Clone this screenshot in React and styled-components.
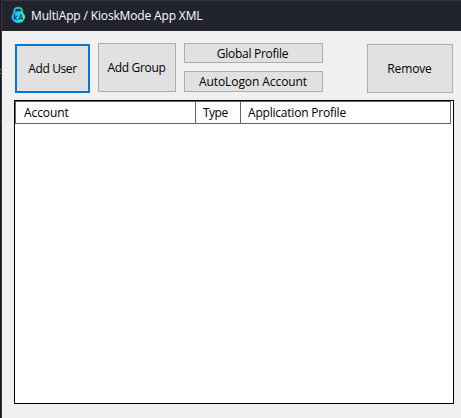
import React from "react";
import styled, { createGlobalStyle } from "styled-components";

const GlobalStyle = createGlobalStyle`
  * { box-sizing: border-box; }
  body { margin: 0; overflow: hidden; }
`;

const Desktop = styled.div`
  width: 461px;
  height: 418px;
  padding-left: 1px;
  background: linear-gradient(
    #15161b 69px, #8a7850 69px, #8a7850 70px, #15161b 70px,
    #15161b 73px, #8a7850 73px, #8a7850 74px, #15161b 74px,
    #15161b 121px, #33353b 121px, #33353b 122px, #15161b 122px
  );
  font-family: "Open Sans", "Noto Sans", sans-serif;
  font-size: 12px;
  color: #000;
`;

const Window = styled.div`
  height: 100%;
  display: flex;
  flex-direction: column;
  border-left: 1px solid #3a3c41;
  background: #f0f0f0;
`;

const TitleBar = styled.header`
  height: 31px;
  display: flex;
  align-items: center;
  padding-left: 9px;
  border-top: 1px solid #363942;
  background: #21242d;
  color: #fff;
`;

const AppIcon = styled.svg`
  flex: none;
  width: 16px;
  height: 18px;
  margin: 0 4px 2px 0;
`;

const Label = styled.span`
  line-height: 16px;
  white-space: nowrap;
  letter-spacing: ${(p) => p.$spacing || 0}px;
`;

const Content = styled.main`
  padding: 12px 7px 0 12px;
`;

const Toolbar = styled.div`
  display: flex;
  align-items: flex-start;
  height: 57px;
  padding-left: 1px;
`;

const ProfileButtons = styled.div`
  display: flex;
  flex-direction: column;
  gap: 8px;
  margin-left: 8px;
`;

const Button = styled.button`
  display: flex;
  align-items: center;
  justify-content: center;
  width: ${(p) => p.$width}px;
  height: ${(p) => p.$height}px;
  margin: ${(p) => p.$margin || 0};
  padding: ${(p) => p.$padding || 0};
  border: ${(p) => (p.$focused ? "2px solid #0078d7" : "1px solid #adadad")};
  border-radius: 0;
  background: #e1e1e1;
  font: inherit;
  color: inherit;
`;

const ListView = styled.section`
  width: 440px;
  height: 304px;
  border: 1px solid #000;
  background: #fff;
`;

const HeaderRow = styled.div`
  display: grid;
  grid-template-columns: 180px 45px 209px;
  width: 436px;
  height: 23px;
  border: 1px solid #646464;
`;

const HeaderCell = styled.div`
  display: flex;
  align-items: center;
  padding: 1px 0 0 ${(p) => p.$inset}px;
  border-right: ${(p) => (p.$last ? "0" : "1px solid #646464")};
`;

function LockIcon() {
  return (
    <AppIcon viewBox="0 0 16 18">
      <defs>
        <linearGradient id="lock" x1="0" y1="0.4" x2="1" y2="0.6">
          <stop offset="0" stopColor="#1c9cf4" />
          <stop offset="0.5" stopColor="#25cdf0" />
          <stop offset="1" stopColor="#3bf5b4" />
        </linearGradient>
      </defs>
      <path d="M3.3 7V5.4C3.3 3 4.9 1.9 7.2 1.9S11.1 3 11.1 5.4V7" fill="none" stroke="#20b8b5" strokeWidth="2.2" />
      <ellipse cx="7.2" cy="11" rx="6.9" ry="5.9" fill="url(#lock)" />
      <path d="M3.5 8V14M6.3 9.8 3.8 11.7 6.3 14M7.8 14 9.8 8.5 11.8 14M8.5 12.5H11.2" fill="none" stroke="#103954" strokeWidth="1" />
    </AppIcon>
  );
}

export default function App() {
  return (
    <>
      <GlobalStyle />
      <Desktop>
        <Window>
          <TitleBar>
            <LockIcon />
            <Label $spacing={-0.15}>MultiApp / KioskMode App XML</Label>
          </TitleBar>
          <Content>
            <Toolbar>
              <Button $focused $width={75} $height={49} $margin="1px 8px 0 0" $padding="1px 0 0"><Label $spacing={-0.4}>Add User</Label></Button>
              <Button $width={78} $height={49} $padding="1px 1px 0 0"><Label $spacing={-0.3}>Add Group</Label></Button>
              <ProfileButtons>
                <Button $width={139} $height={20} $padding="2px 2px 0 0"><Label $spacing={-0.28}>Global Profile</Label></Button>
                <Button $width={139} $height={21} $padding="1px 1px 0 0"><Label $spacing={-0.08}>AutoLogon Account</Label></Button>
              </ProfileButtons>
              <Button $width={86} $height={49} $margin="1px 0 0 44px" $padding="1px 1px 0 0"><Label $spacing={-0.15}>Remove</Label></Button>
            </Toolbar>
            <ListView>
              <HeaderRow>
                <HeaderCell $inset={8}><Label $spacing={-0.1}>Account</Label></HeaderCell>
                <HeaderCell $inset={7}><Label $spacing={-0.5}>Type</Label></HeaderCell>
                <HeaderCell $inset={7} $last><Label $spacing={-0.21}>Application Profile</Label></HeaderCell>
              </HeaderRow>
            </ListView>
          </Content>
        </Window>
      </Desktop>
    </>
  );
}
